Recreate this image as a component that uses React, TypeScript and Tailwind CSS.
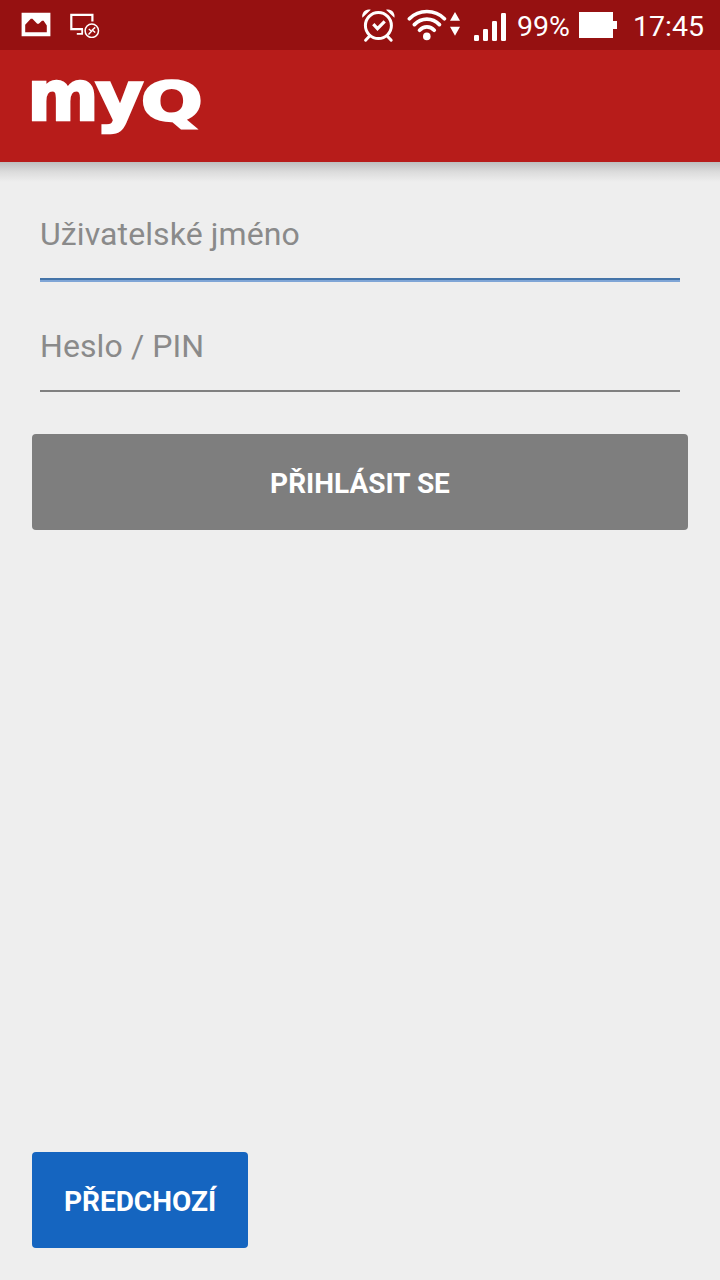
import type { ReactNode } from 'react';

interface FieldProps {
  label: string;
  focused?: boolean;
}

function PictureIcon() {
  return (
    <svg width="30" height="26" viewBox="0 0 30 26">
      <path
        fill="#fff"
        fillRule="evenodd"
        d="M.6 .8h28.8v23.4H.6zM4.2 20.2h21.6V13.4l-3.2-4.6h-1.6l-3.2 3h-1.6l-4.8-5h-1.6l-5.6 6z"
      />
    </svg>
  );
}

function RemoteDesktopIcon() {
  return (
    <svg width="30" height="26" viewBox="0 0 30 26" fill="none" stroke="#fff">
      <path d="M22.4 9.5V2.8H1.3v14.4H13" strokeWidth="2.2" />
      <path d="M12.2 17v4.2M6.8 21.8H13" strokeWidth="1.8" />
      <circle cx="21.8" cy="18.8" r="6.7" strokeWidth="1.5" />
      <path d="m18.8 17 2.7 2.2-3 3.2M25.2 15.4l-2.9 2.5 2.9 2.6" strokeWidth="1.4" />
    </svg>
  );
}

function AlarmIcon() {
  return (
    <svg width="36" height="36" viewBox="0 0 36 36" fill="none" stroke="#fff">
      <circle cx="17.4" cy="18.6" r="13" strokeWidth="3" />
      <path d="m12.3 17.2 4.2 4.4 7.2-7.2" strokeWidth="3.2" />
      <path d="m8.4 29.2-3.8 4M26.4 29.2l3.8 4" strokeWidth="3" strokeLinecap="round" />
      <path fill="#fff" stroke="none" d="M1.4 10.8C.2 6 4.4 1.2 9.8 2.7zM33.4 10.8C34.6 6 30.4 1.2 25 2.7z" />
    </svg>
  );
}

function WifiIcon() {
  return (
    <svg width="54" height="36" viewBox="0 0 54 36" fill="none" stroke="#fff" strokeLinecap="round">
      <path
        d="M2.4 11.7c9.5-9.6 25.5-9.6 35 0M7.4 17.6c7-7.3 18-7.3 25 0M12.6 23.2c4-4.4 10.6-4.4 14.6 0"
        strokeWidth="3.7"
      />
      <circle cx="19.8" cy="29.4" r="3.8" fill="#fff" stroke="none" />
      <path fill="#fff" stroke="none" d="m48 5 5 8.8H43zM43 19.8h10l-5 9z" />
    </svg>
  );
}

function SignalIcon() {
  return (
    <svg width="34" height="30" viewBox="0 0 34 30" fill="#fff">
      <rect x="0" y="23" width="5" height="6" rx="1.2" />
      <rect x="9" y="17" width="5" height="12" rx="1.2" />
      <rect x="18" y="9" width="5" height="20" rx="1.2" />
      <rect x="27" y="1" width="5" height="28" rx="1.2" />
    </svg>
  );
}

function BatteryIcon() {
  return (
    <svg width="38" height="26" viewBox="0 0 38 26">
      <path fill="#fff" d="M0 0h34v9h4v8h-4v9H0z" />
    </svg>
  );
}

function Logo() {
  return (
    <svg
      className="block"
      width="200"
      height="112"
      viewBox="-20 0 200 112"
      fill="#fff"
      stroke="#fff"
      strokeWidth="2.5"
      fontFamily="DejaVu Sans, sans-serif"
      fontWeight="700"
    >
      <text x="-4.5" y="70" fontSize="69" textLength="71" lengthAdjust="spacingAndGlyphs">
        m
      </text>
      <text x="63.5" y="69" fontSize="66" textLength="48" lengthAdjust="spacingAndGlyphs">
        y
      </text>
      <text x="109" y="70" fontSize="53" textLength="61.5" lengthAdjust="spacingAndGlyphs">
        Q
      </text>
    </svg>
  );
}

function StatusBar() {
  return (
    <div className="flex h-[50px] items-center bg-[#961111] pr-4 pl-[21px] text-[28.5px] leading-none text-white">
      <PictureIcon />
      <div className="ml-[19px]">
        <RemoteDesktopIcon />
      </div>
      <div className="ml-auto flex items-center">
        <AlarmIcon />
        <div className="ml-2.5">
          <WifiIcon />
        </div>
        <div className="ml-[13px] pt-1">
          <SignalIcon />
        </div>
        <span className="ml-[9px] w-[53px] pt-[5px]">99%</span>
        <div className="ml-[9px]">
          <BatteryIcon />
        </div>
        <span className="ml-4 w-[71px] pt-[5px]">17:45</span>
      </div>
    </div>
  );
}

function Field({ label, focused = false }: FieldProps) {
  return (
    <label className="flex h-28 flex-col justify-between">
      <span className="pt-[15px] text-[32px] leading-[38px] tracking-[0.1px] text-[#8a8a8a]">
        {label}
      </span>
      <span
        className={
          focused
            ? 'mb-[30px] h-1 border-t-2 border-[#4474a8] bg-[#7fa5d6]'
            : 'mb-8 h-0.5 bg-[#808080]'
        }
      />
    </label>
  );
}

function Button({ className, children }: { className: string; children: ReactNode }) {
  return (
    <button className={`h-24 rounded-[4px] pt-1 text-[28px] font-bold text-white ${className}`}>
      {children}
    </button>
  );
}

export default function App() {
  return (
    <div className="flex h-[1280px] w-[720px] flex-col bg-[#eeeeee] font-['Roboto',sans-serif]">
      <StatusBar />

      <header className="h-28 bg-[#b71c1a] pl-3">
        <Logo />
      </header>
      <div className="h-5 bg-linear-to-b from-[#bdbebe] via-[#dcdcdc] to-[#eeeeee]" />

      <main className="flex flex-1 flex-col px-8 pt-[18px] pb-8">
        <div className="px-2">
          <Field label="Uživatelské jméno" focused />
          <Field label="Heslo / PIN" />
        </div>
        <Button className="mt-2.5 bg-[#7e7e7e]">PŘIHLÁSIT SE</Button>
        <Button className="mt-auto w-[216px] bg-[#1565c0]">PŘEDCHOZÍ</Button>
      </main>
    </div>
  );
}
